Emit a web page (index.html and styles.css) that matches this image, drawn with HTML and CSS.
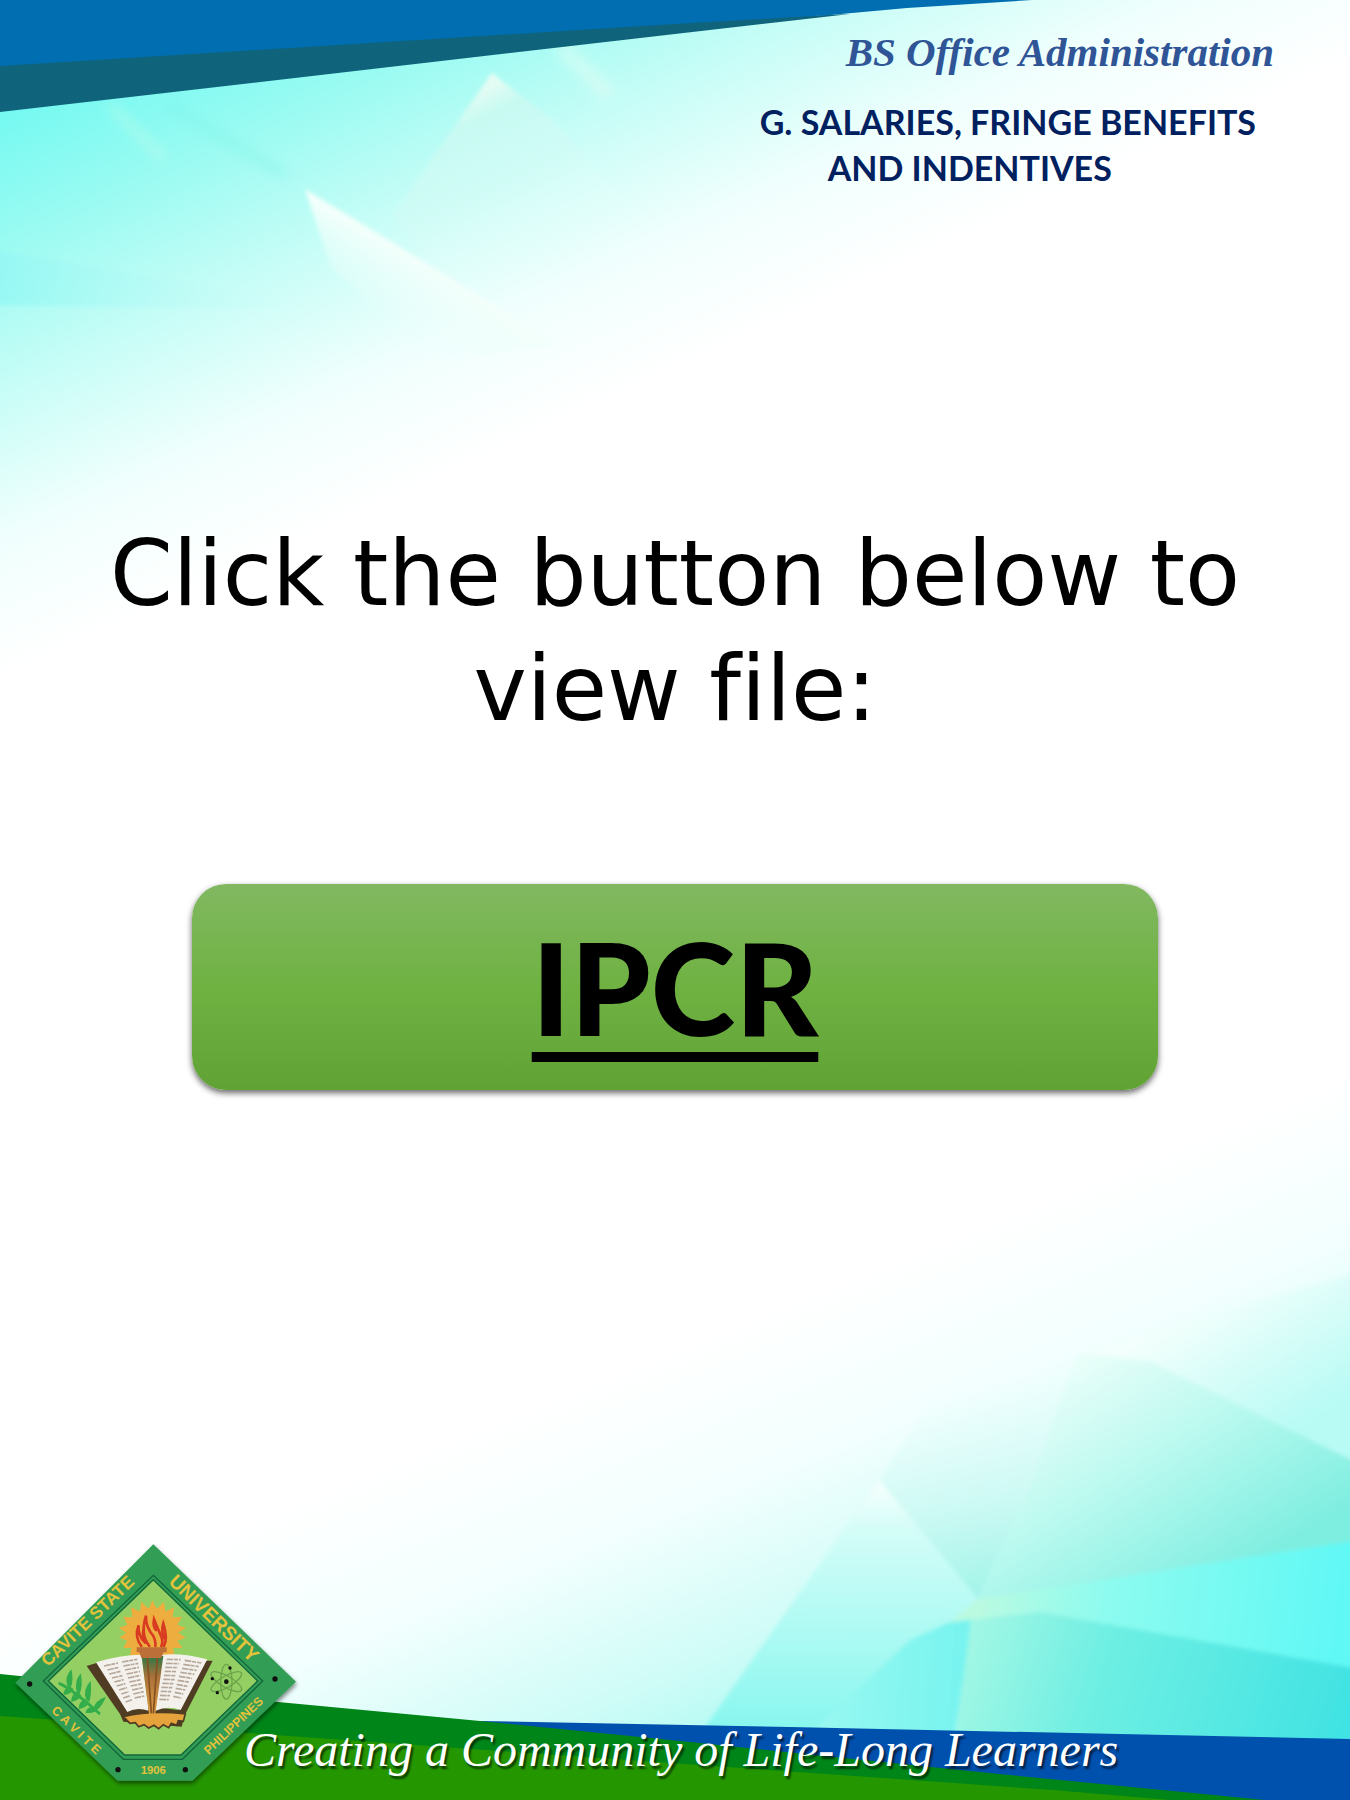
FILE: index.html
```html
<!DOCTYPE html>
<html lang="en">
<head>
<meta charset="utf-8">
<meta name="viewport" content="width=device-width, initial-scale=1">
<title>BS Office Administration - IPCR</title>
<link rel="stylesheet" href="styles.css">
</head>
<body>
<div class="page">
  <svg class="backdrop" viewBox="0 0 1350 1800" preserveAspectRatio="none" aria-hidden="true">
    <defs>
      <linearGradient id="sky" gradientUnits="userSpaceOnUse" x1="0" y1="110" x2="215" y2="580">
        <stop offset="0" stop-color="#74f9f1"/><stop offset=".25" stop-color="#9cfbf2"/><stop offset=".5" stop-color="#c8fdf7"/><stop offset=".75" stop-color="#effffd"/><stop offset="1" stop-color="#fff"/>
      </linearGradient>
      <linearGradient id="sea" gradientUnits="userSpaceOnUse" x1="820" y1="1290" x2="1010" y2="1760">
        <stop offset="0" stop-color="#fff"/><stop offset=".3" stop-color="#f2fffe"/><stop offset=".6" stop-color="#cefcf7"/><stop offset="1" stop-color="#86f7ee"/>
      </linearGradient>
      <linearGradient id="peak" gradientUnits="userSpaceOnUse" x1="492" y1="73" x2="570" y2="230">
        <stop offset="0" stop-color="#effdf4"/><stop offset=".2" stop-color="#c8faf2"/><stop offset=".6" stop-color="#d2fcf6" stop-opacity=".7"/><stop offset="1" stop-color="#ecfffc" stop-opacity="0"/>
      </linearGradient>
      <linearGradient id="ray" gradientUnits="userSpaceOnUse" x1="400" y1="250" x2="360" y2="320">
        <stop offset="0" stop-color="#f3fffb"/><stop offset="1" stop-color="#e8fffb" stop-opacity="0"/>
      </linearGradient>
      <linearGradient id="fold" gradientUnits="userSpaceOnUse" x1="0" y1="270" x2="350" y2="310">
        <stop offset="0" stop-color="#96f8f3"/><stop offset="1" stop-color="#dafdf8" stop-opacity="0"/>
      </linearGradient>
      <linearGradient id="facetUpper" gradientUnits="userSpaceOnUse" x1="1180" y1="1320" x2="1260" y2="1450">
        <stop offset="0" stop-color="#f2fffc"/><stop offset="1" stop-color="#b8fbf5"/>
      </linearGradient>
      <linearGradient id="facetMid" gradientUnits="userSpaceOnUse" x1="1080" y1="1340" x2="1230" y2="1580">
        <stop offset="0" stop-color="#f0fffb"/><stop offset=".5" stop-color="#b9f9ef"/><stop offset="1" stop-color="#7eeee0"/>
      </linearGradient>
      <linearGradient id="facetInner" gradientUnits="userSpaceOnUse" x1="960" y1="1390" x2="1000" y2="1600">
        <stop offset="0" stop-color="#e6fdfa" stop-opacity="0"/><stop offset=".5" stop-color="#d0faf5"/><stop offset="1" stop-color="#9ff4e8"/>
      </linearGradient>
      <linearGradient id="facetPeak" gradientUnits="userSpaceOnUse" x1="879" y1="1480" x2="880" y2="1730">
        <stop offset="0" stop-color="#f8fffd"/><stop offset=".2" stop-color="#d4fdf8"/><stop offset="1" stop-color="#88f7ef"/>
      </linearGradient>
      <linearGradient id="facetBright" gradientUnits="userSpaceOnUse" x1="978" y1="1600" x2="1350" y2="1650">
        <stop offset="0" stop-color="#bafae0"/><stop offset=".35" stop-color="#8cfbf0"/><stop offset="1" stop-color="#5ef8f5"/>
      </linearGradient>
      <linearGradient id="facetDeep" gradientUnits="userSpaceOnUse" x1="970" y1="1620" x2="1350" y2="1740">
        <stop offset="0" stop-color="#a4f7e4"/><stop offset=".35" stop-color="#6eefe3"/><stop offset="1" stop-color="#3fe2e3"/>
      </linearGradient>
      <linearGradient id="facetBlue" gradientUnits="userSpaceOnUse" x1="820" y1="1680" x2="970" y2="1690">
        <stop offset="0" stop-color="#98f8f1"/><stop offset="1" stop-color="#76f3ef"/>
      </linearGradient>
      <filter id="soft" x="-10%" y="-10%" width="120%" height="120%"><feGaussianBlur stdDeviation="2"/></filter>
      <filter id="softer" x="-50%" y="-50%" width="200%" height="200%"><feGaussianBlur stdDeviation="6"/></filter>
    </defs>
    <rect width="1350" height="800" fill="url(#sky)"/>
    <rect y="1000" width="1350" height="800" fill="url(#sea)"/>
    <g filter="url(#softer)" opacity=".4">
      <path d="M165 103 L285 175" stroke="#7af0e4" stroke-width="8"/>
      <path d="M110 105 L165 160" stroke="#c8fbe9" stroke-width="10"/>
      <path d="M560 46 L610 95" stroke="#effdf2" stroke-width="16"/>
    </g>
    <g filter="url(#soft)">
      <path d="M-10 249 L344 310 L-10 305Z" fill="url(#fold)"/>
      <path d="M492 73 L392 216 L480 320 L620 200 L555 122Z" fill="url(#peak)"/>
      <path d="M305 189 L560 345 L440 360 L331 268Z" fill="url(#ray)"/>
      <path d="M1077 1353 L1360 1272 V1464 L1149 1361Z" fill="url(#facetUpper)"/>
      <path d="M942 1384 L1077 1353 L1028 1492 L978 1599 L879 1480Z" fill="url(#facetInner)"/>
      <path d="M1077 1353 L1149 1361 L1360 1464 V1540 L978 1600 L1028 1492Z" fill="url(#facetMid)"/>
      <path d="M879 1480 L978 1600 L950 1622 L953 1740 H696Z" fill="url(#facetPeak)"/>
      <path d="M950 1622 L974 1618 L953 1740 H804 L910 1640Z" fill="url(#facetBlue)"/>
      <path d="M972 1612 L1041 1612 L1360 1669 V1760 H953Z" fill="url(#facetDeep)"/>
      <path d="M950 1622 L978 1599 L1360 1540 V1669 L1041 1612Z" fill="url(#facetBright)"/>
    </g>
    <path d="M0 66 L675 23 L850 0 H0Z M0 66 V112 L675 34 L850 14 L700 20Z" fill="#0f647c"/>
    <path d="M0 66 L675 24 L830 15 L907 8 L1032 0 H0Z" fill="#006eb0"/>
    <path d="M480 1721 L790 1727 L1350 1739 V1800 H480Z" fill="#0050ae"/>
    <path d="M0 1674 L278 1702 L480 1721 Q600 1733 700 1743 L999 1774 L1265 1800 H0Z" fill="#008518"/>
    <path d="M0 1716 L248 1733 L500 1751 L700 1765 L1053 1790 L1170 1800 H0Z" fill="#249700"/>
  </svg>

  <header class="masthead">
    <p class="program">BS Office Administration</p>
    <h1 class="section-title">G. SALARIES, FRINGE BENEFITS <span class="hang">AND INDENTIVES</span></h1>
  </header>

  <main class="content">
    <p class="prompt">Click the button below to view file:</p>
    <a class="file-link" href="#ipcr">IPCR</a>
  </main>

  <footer class="footer">
    <svg class="seal" viewBox="0 0 900 810" role="img" aria-label="Cavite State University seal">
      <defs>
        <filter id="drop" x="-10%" y="-10%" width="120%" height="120%"><feDropShadow dx="2" dy="8" stdDeviation="7" flood-opacity=".5"/></filter>
        <linearGradient id="torch" x1="0" y1="0" x2="0" y2="1"><stop offset="0" stop-color="#2c7845"/><stop offset=".35" stop-color="#a8703a"/><stop offset="1" stop-color="#e0a048"/></linearGradient>
      </defs>
      <path d="M460 43 L888 455 L577 752 H353 L46 458Z" fill="#309e55" filter="url(#drop)"/>
      <path d="M460 136 L788 453 L547 688 H370 L130 453Z" fill="#309e55" stroke="#14653b" stroke-width="4"/>
      <path d="M460 149 L773 453 L543 675 H374 L145 453Z" fill="#93cf62" stroke="#14653b" stroke-width="4"/>
      <g fill="#eeae3f">
        <circle cx="457" cy="308" r="76"/>
        <path d="M457 210 L470 238 L492 215 L496 245 L523 232 L517 262 L546 260 L532 284 L558 294 L535 308 L557 323 L532 332 L547 354 L519 354 L523 375 H390 L394 354 L370 354 L382 332 L357 323 L379 308 L356 294 L382 284 L370 260 L397 262 L393 232 L420 245 L424 215 L446 238Z"/>
      </g>
      <g fill="none" stroke="#d93a22" stroke-width="8" stroke-linecap="round">
        <path d="M424 348 Q402 320 416 286 Q412 315 436 338"/>
        <path d="M448 348 Q420 315 438 257 Q436 290 460 318 Q468 335 466 348"/>
        <path d="M468 300 Q458 290 462 268 Q475 300 484 320 Q490 335 484 348"/>
        <path d="M492 348 Q504 325 490 280 Q482 305 494 326"/>
        <path d="M432 325 Q426 310 432 298"/>
      </g>
      <path d="M260 408 L292 398 L388 540 L455 530 L535 540 L612 392 L638 392 L553 558 L545 590 L370 575 L360 552Z" fill="#4f3c22"/>
      <path d="M370 560 Q455 540 556 552 L550 574 L535 572 L530 586 L514 580 L506 593 L490 584 L476 596 L462 586 L446 594 L432 584 L416 590 L406 578 L390 580Z" fill="#e7a33b" stroke="#4f3c22" stroke-width="5"/>
      <path d="M288 397 Q360 374 424 374 L446 542 Q410 530 382 546Z" fill="#f4f1ec"/>
      <path d="M486 374 Q550 368 622 388 L542 540 Q505 526 467 542Z" fill="#f4f1ec"/>
      <g stroke="#b5a79a" stroke-width="5" stroke-dasharray="20 2 12 3">
        <path d="M312 408 L354 399 M322 420 L358 412 M328 432 L362 424 M336 444 L367 437 M343 456 L371 449 M350 468 L376 461 M357 480 L381 473 M364 492 L386 485 M370 504 L391 497 M377 516 L396 509"/>
        <path d="M366 396 L412 388 M370 408 L415 400 M375 420 L417 412 M380 432 L420 424 M384 444 L422 436 M388 456 L424 449 M392 468 L427 461 M396 480 L429 473 M400 492 L431 485 M404 504 L433 498"/>
        <path d="M500 388 L542 389 M498 400 L538 401 M496 412 L534 413 M494 424 L531 425 M492 436 L527 437 M490 448 L524 449 M487 460 L520 461 M484 472 L517 473 M482 484 L514 485 M480 496 L510 497 M478 508 L506 509"/>
        <path d="M554 391 L604 399 M550 403 L596 410 M546 415 L590 421 M541 427 L583 433 M537 439 L576 445 M533 451 L569 457 M530 463 L562 469 M527 475 L556 480 M524 487 L550 492 M520 499 L544 504"/>
      </g>
      <path d="M425 378 H490 L466 552 H447Z" fill="url(#torch)"/>
      <path d="M442 384 L454 550 M472 384 L460 550" stroke="#86501f" stroke-width="5"/>
      <path d="M410 352 H500 V367 H490 L484 384 H424 L418 367 H410Z" fill="#bc6f38"/>
      <g fill="#32ad4a">
        <path d="M176 455 Q205 462 302 548 L298 556 Q220 485 176 464Z"/>
        <path d="M202 467 Q192 442 214 418 Q222 450 212 474Z M230 486 Q222 455 242 430 Q250 466 238 494Z M258 508 Q248 478 272 452 Q276 486 268 516Z M282 534 Q284 512 318 500 Q306 530 288 542Z"/>
        <path d="M210 470 Q190 475 190 494 Q214 494 220 476Z M230 486 Q212 496 214 516 Q240 510 244 496Z M256 508 Q236 514 236 538 Q262 530 268 518Z M280 530 Q260 530 256 548 Q282 552 290 540Z"/>
      </g>
      <g fill="none" stroke="#6da34b" stroke-width="4">
        <ellipse cx="679" cy="455" rx="17" ry="52"/>
        <ellipse cx="679" cy="455" rx="17" ry="52" transform="rotate(60 679 455)"/>
        <ellipse cx="679" cy="455" rx="17" ry="52" transform="rotate(120 679 455)"/>
      </g>
      <g fill="#111">
        <circle cx="679" cy="455" r="7"/><circle cx="690" cy="414" r="5"/><circle cx="637" cy="446" r="5"/><circle cx="652" cy="488" r="5"/>
        <circle cx="89" cy="462" r="8"/><circle cx="825" cy="447" r="8"/><circle cx="354" cy="719" r="8"/><circle cx="556" cy="719" r="8"/>
      </g>
      <g class="seal-text">
        <text font-size="52" transform="translate(144 412) rotate(-44)">CAVITE STATE</text>
        <text font-size="58" transform="translate(503 158) rotate(44)">UNIVERSITY</text>
        <text font-size="38" transform="translate(152 544) rotate(44)">C A V I T E</text>
        <text font-size="37" transform="translate(626 676) rotate(-44)">PHILIPPINES</text>
        <text x="460" y="732" font-size="34" text-anchor="middle">1906</text>
      </g>
    </svg>
    <p class="slogan">Creating a Community of Life-Long Learners</p>
  </footer>
</div>
</body>
</html>
```
FILE: styles.css
```css
* {
  box-sizing: border-box;
}

body {
  margin: 0;
  background: #fff;
  color: #000;
}

p,
h1 {
  margin: 0;
}

.page {
  position: relative;
  display: flex;
  flex-direction: column;
  min-height: 100vh;
  overflow: hidden;
}

.backdrop {
  position: absolute;
  inset: 0;
  width: 100%;
  height: 100%;
}

.masthead,
.content,
.footer {
  position: relative;
}

.masthead {
  display: flex;
  flex-direction: column;
  align-items: flex-end;
  gap: 23px;
  padding: 28px 76px 0;
}

.program {
  color: #2f5597;
  font: italic bold 41px/48px "Brush Script MT", "Liberation Serif", serif;
}

.section-title {
  padding-right: 18px;
  color: #002060;
  font: bold 34px/46px "Century Gothic", Lato, sans-serif;
}

.hang {
  display: block;
  padding-left: 68px;
}

.content {
  display: flex;
  flex-direction: column;
  align-items: center;
  gap: 138px;
  padding: 325px 100px 64px;
}

.prompt {
  font: 90px/115px Verdana, "DejaVu Sans", sans-serif;
  font-variant-ligatures: none;
  text-align: center;
}

.file-link {
  display: flex;
  align-items: center;
  justify-content: center;
  width: 84%;
  height: 206px;
  border-radius: 34px;
  background: linear-gradient(#81b861, #6fb242 50%, #61a235);
  box-shadow: 0 3px 6px rgba(0, 0, 0, .6);
  color: #000;
  font: 900 128px/160px Lato, sans-serif;
  text-decoration: underline;
  text-decoration-thickness: 10px;
  text-underline-offset: 16px;
  text-decoration-skip-ink: none;
}

.footer {
  display: flex;
  align-items: flex-end;
  margin-top: auto;
}

.seal {
  flex: none;
  width: 300px;
  height: 270px;
}

.seal-text {
  fill: #e3c23c;
  font-family: "Liberation Sans", sans-serif;
  font-weight: bold;
}

.slogan {
  margin-left: -56px;
  padding-bottom: 22px;
  color: #fff;
  font: italic 48px/56px "Liberation Serif", serif;
  text-shadow: 2px 3px 2px rgba(0, 0, 0, .6);
  white-space: nowrap;
}
```
